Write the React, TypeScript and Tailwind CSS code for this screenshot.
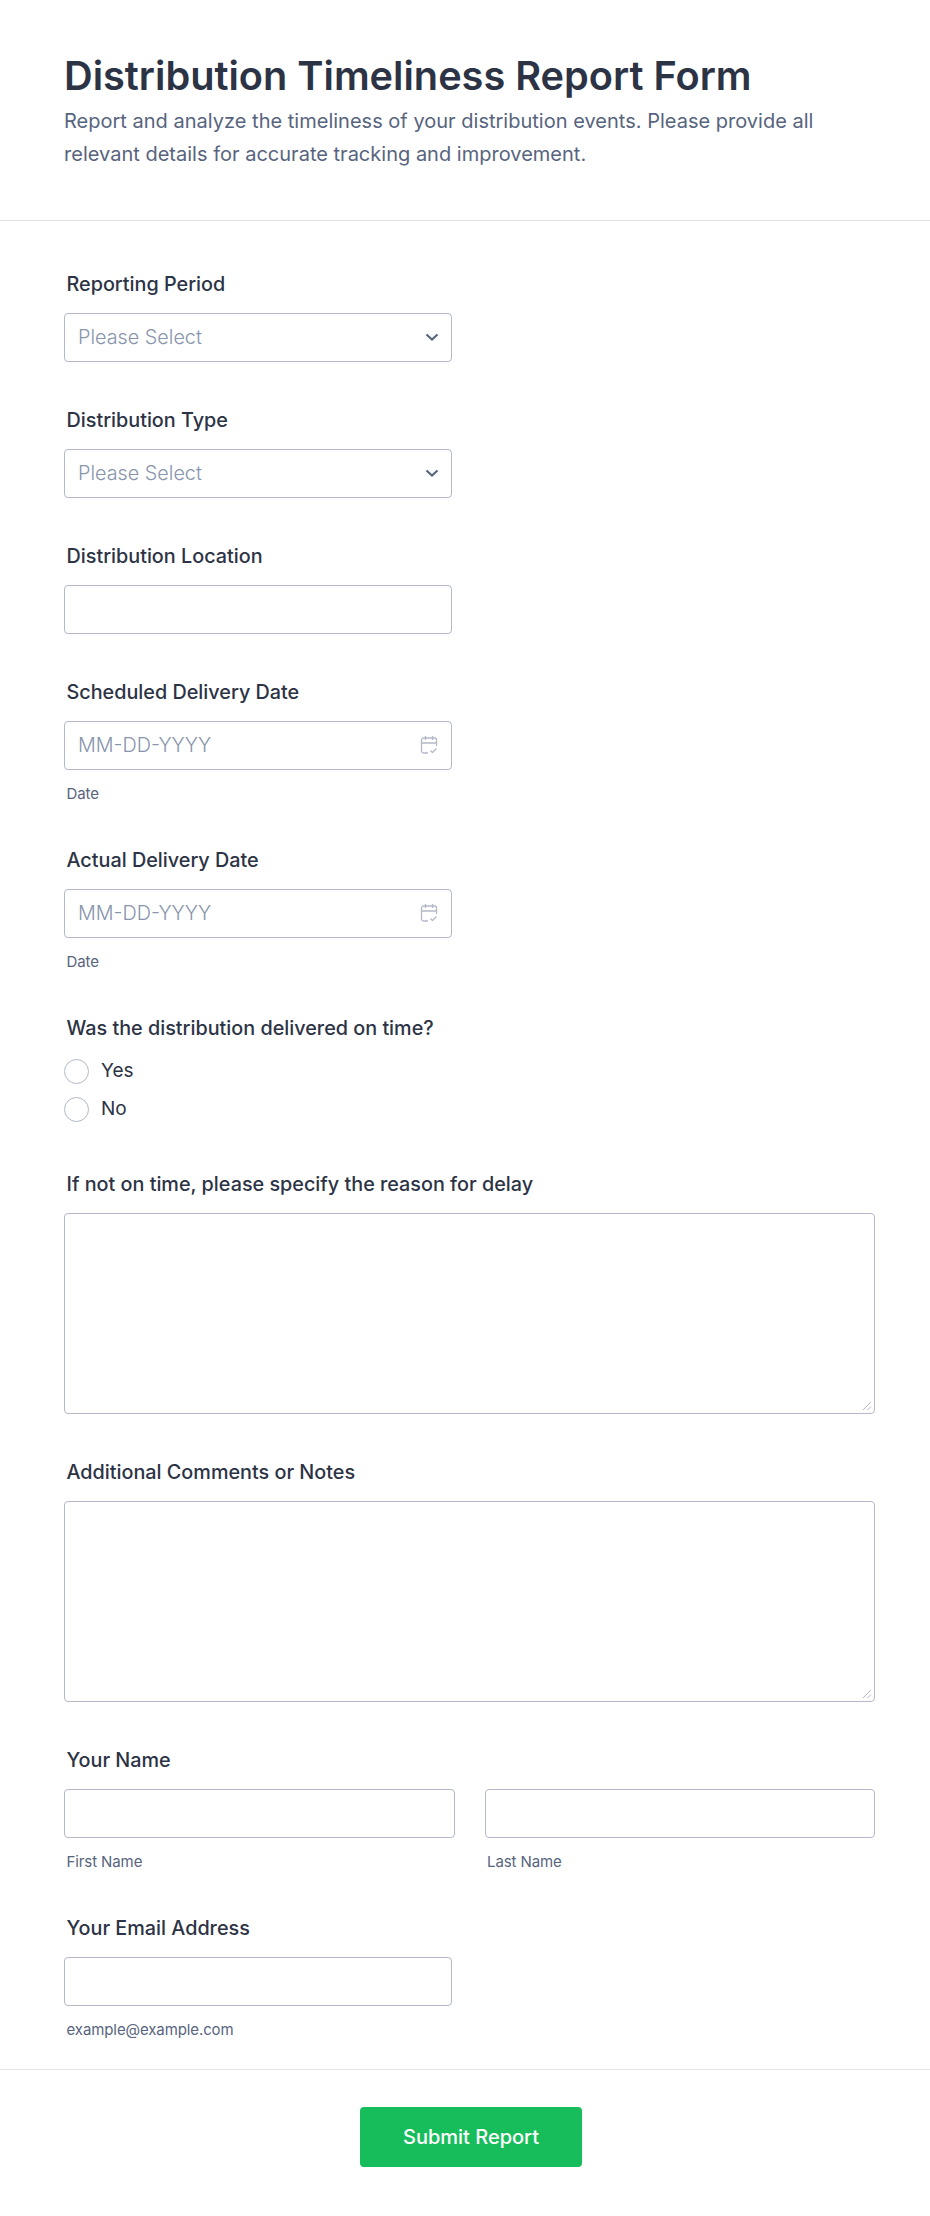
import { ReactNode } from "react";

const Label = ({ children }: { children: ReactNode }) => (
  <label className="block pl-[2.500px] text-[19.800px] leading-[24px] font-medium text-[#2c3345] mb-[17px]">
    {children}
  </label>
);

const Sub = ({ children }: { children: ReactNode }) => (
  <p className="pl-[2.500px] mt-[15px] text-[15px] leading-[18px] tracking-[-0.1px] text-[#57647e]">{children}</p>
);

const Chevron = () => (
  <svg width="14" height="14" viewBox="0 0 14 14" fill="none" className="absolute right-[12px] top-[16px]">
    <path d="M1.500 4.500 7 9.500l5.500-5" stroke="#57647e" strokeWidth="2.200" />
  </svg>
);

const CalendarIcon = () => (
  <svg width="18" height="20" viewBox="0 0 18 20" fill="none" stroke="#b4b8c9" strokeWidth="1.300" className="absolute right-[13px] top-[13px]">
    <path d="M8 18H3.500a2 2 0 0 1-2-2V5a2 2 0 0 1 2-2h11a2 2 0 0 1 2 2v6" />
    <path d="M1.500 8h15M5.500 1v4M12.500 1v4M10.500 15.500l2 2 4-4" />
  </svg>
);

const Select = () => (
  <div className="relative w-[388px] h-[49px] bg-white border border-[#b4b8c9] rounded-[4px] flex items-center px-[13px] pt-[1px] text-[19.800px] text-[#8894ab] font-light">
    Please Select
    <Chevron />
  </div>
);

const TextBox = ({ w = "w-[388px]" }: { w?: string }) => (
  <div className={`${w} h-[49px] bg-white border border-[#b4b8c9] rounded-[4px]`} />
);

const DateBox = () => (
  <div className="relative w-[388px] h-[49px] bg-white border border-[#b4b8c9] rounded-[4px] flex items-center px-[13px] pt-[1px] text-[19.800px] text-[#8894ab] font-light">
    MM-DD-YYYY
    <CalendarIcon />
  </div>
);

const TextArea = () => (
  <div className="relative w-full h-[201px] bg-white border border-[#b4b8c9] rounded-[4px]">
    <svg width="10" height="10" viewBox="0 0 10 10" fill="none" stroke="#b4b8c9" className="absolute right-[2px] bottom-[2px]">
      <path d="M1 9 9 1M5.500 9 9 5.500" />
    </svg>
  </div>
);

const Radio = ({ label }: { label: string }) => (
  <div className="flex items-center gap-[12px] h-[38px]">
    <span className="w-[25px] h-[25px] rounded-full border border-[#b4b8c9] bg-white" />
    <span className="text-[19px] text-[#2c3345]">{label}</span>
  </div>
);

export default function App() {
  return (
    <div className="min-h-[2216px] bg-white font-['Inter',sans-serif]">
      <header className="h-[221px] border-b border-[#dfe1e8] px-[64px] pt-[52px]">
        <h1 className="text-[39.700px] leading-[48px] font-semibold text-[#2c3345]">
          Distribution Timeliness Report Form
        </h1>
        <p className="mt-[5px] text-[20px] leading-[33px] tracking-[0.01px] text-[#57647e] w-[780px]">
          Report and analyze the timeliness of your distribution events. Please provide all relevant details for accurate tracking and improvement.
        </p>
      </header>

      <main className="pl-[64px] pr-[55px] pt-[51px]">
        <section className="h-[136px]">
          <Label>Reporting Period</Label>
          <Select />
        </section>
        <section className="h-[136px]">
          <Label>Distribution Type</Label>
          <Select />
        </section>
        <section className="h-[136px]">
          <Label>Distribution Location</Label>
          <TextBox />
        </section>
        <section className="h-[168px]">
          <Label>Scheduled Delivery Date</Label>
          <DateBox />
          <Sub>Date</Sub>
        </section>
        <section className="h-[168px]">
          <Label>Actual Delivery Date</Label>
          <DateBox />
          <Sub>Date</Sub>
        </section>
        <section className="h-[156px]">
          <Label>Was the distribution delivered on time?</Label>
          <div className="-mt-[5px]">
            <Radio label="Yes" />
            <Radio label="No" />
          </div>
        </section>
        <section className="h-[288px]">
          <Label>If not on time, please specify the reason for delay</Label>
          <TextArea />
        </section>
        <section className="h-[288px]">
          <Label>Additional Comments or Notes</Label>
          <TextArea />
        </section>
        <section className="h-[168px]">
          <Label>Your Name</Label>
          <div className="flex gap-[30px]">
            <div className="flex-1">
              <TextBox w="w-full" />
              <Sub>First Name</Sub>
            </div>
            <div className="flex-1">
              <TextBox w="w-full" />
              <Sub>Last Name</Sub>
            </div>
          </div>
        </section>
        <section className="h-[153px]">
          <Label>Your Email Address</Label>
          <TextBox />
          <Sub>example@example.com</Sub>
        </section>
      </main>

      <footer className="border-t border-[#e3e5ea] flex justify-center pt-[37px] pl-[12px]">
        <button className="w-[222px] h-[60px] rounded-[4px] bg-[#18bd5b] text-white text-[20px] font-medium">
          Submit Report
        </button>
      </footer>
    </div>
  );
}
